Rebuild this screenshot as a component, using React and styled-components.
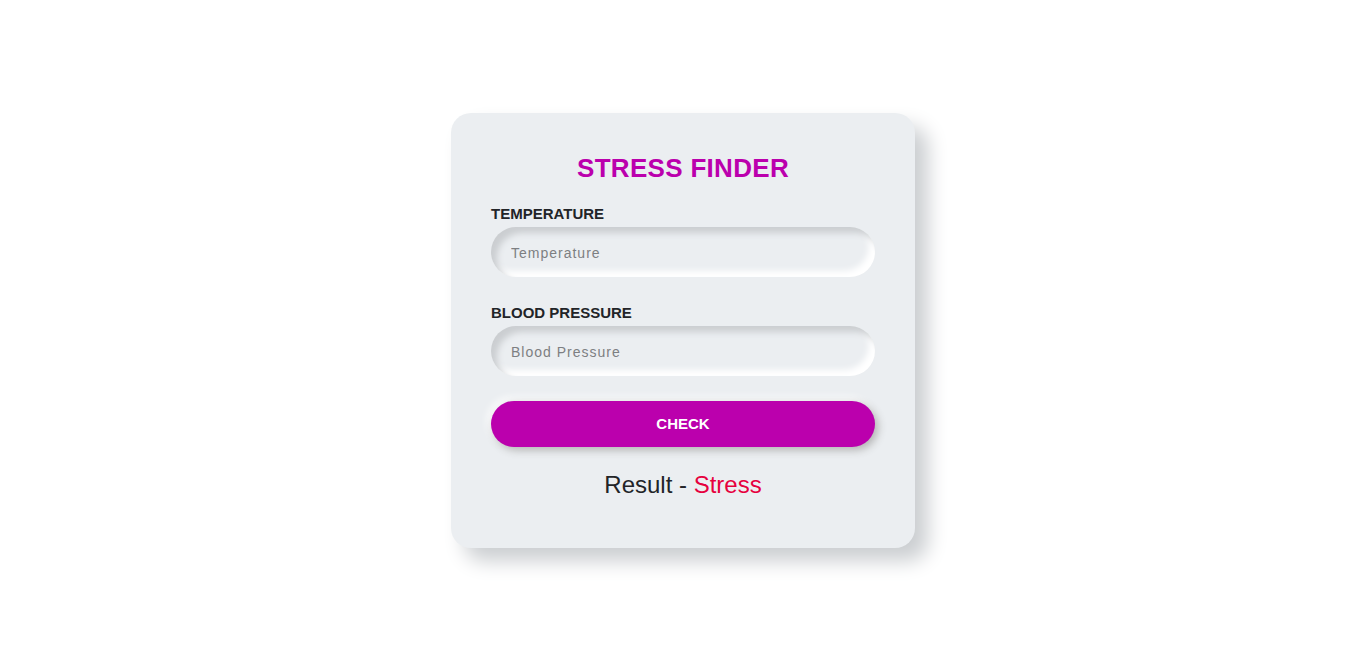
import React, { useState } from "react";
import styled, { createGlobalStyle } from "styled-components";

const GlobalStyle = createGlobalStyle`
  * { box-sizing: border-box; }
  body {
    margin: 0;
    background: #ffffff;
    font-family: "Liberation Sans", Arial, sans-serif;
  }
`;

const Page = styled.div`
  min-height: 100vh;
  padding-top: 3px;
  display: flex;
  align-items: center;
  justify-content: center;
`;

const Card = styled.div`
  width: 464px;
  padding: 40px 40px 49px;
  background: #ebeef1;
  border-radius: 20px;
  box-shadow: 13px 13px 20px #cbced1, -13px -13px 20px #ffffff;
  display: flex;
  flex-direction: column;
`;

const Title = styled.h1`
  margin: 0 0 22px;
  font-size: 26px;
  font-weight: 700;
  line-height: 30px;
  text-align: center;
  color: #bb00ad;
  letter-spacing: 0.3px;
`;

const Field = styled.div`
  display: flex;
  flex-direction: column;
  gap: 5px;
  margin-bottom: ${(p) => p.gap}px;
`;

const Label = styled.label`
  font-size: 15px;
  line-height: 17px;
  font-weight: 700;
  color: #222428;
`;

const Input = styled.input`
  height: 50px;
  width: 100%;
  border: none;
  outline: none;
  border-radius: 25px;
  padding: 2px 20px 0;
  background: #ebeef1;
  font-family: "Liberation Sans", Arial, sans-serif;
  font-size: 14px;
  letter-spacing: 1px;
  color: #333;
  box-shadow: inset 6px 6px 6px #cbced1, inset -6px -6px 6px #ffffff;

  &::placeholder {
    color: #7d7f82;
  }
`;

const Button = styled.button`
  height: 46px;
  width: 100%;
  padding: 0 0 2px;
  border: none;
  border-radius: 23px;
  background: #bb00ad;
  color: #ffffff;
  font-family: "Liberation Sans", Arial, sans-serif;
  font-size: 15px;
  font-weight: 700;
  cursor: pointer;
  box-shadow: 3px 3px 8px #b1b1b1, -3px -3px 8px #ffffff;
  margin-bottom: 24px;
`;

const Result = styled.p`
  margin: 0;
  font-size: 24px;
  line-height: 28px;
  text-align: center;
  color: #222428;
`;

const Verdict = styled.span`
  color: #e6003e;
`;

export default function App() {
  const [temp, setTemp] = useState("");
  const [pressure, setPressure] = useState("");

  return (
    <>
      <GlobalStyle />
      <Page>
        <Card>
          <Title>STRESS FINDER</Title>
          <Field gap={27}>
            <Label>TEMPERATURE</Label>
            <Input
              placeholder="Temperature"
              value={temp}
              onChange={(e) => setTemp(e.target.value)}
            />
          </Field>
          <Field gap={25}>
            <Label>BLOOD PRESSURE</Label>
            <Input
              placeholder="Blood Pressure"
              value={pressure}
              onChange={(e) => setPressure(e.target.value)}
            />
          </Field>
          <Button>CHECK</Button>
          <Result>
            Result - <Verdict>Stress</Verdict>
          </Result>
        </Card>
      </Page>
    </>
  );
}
